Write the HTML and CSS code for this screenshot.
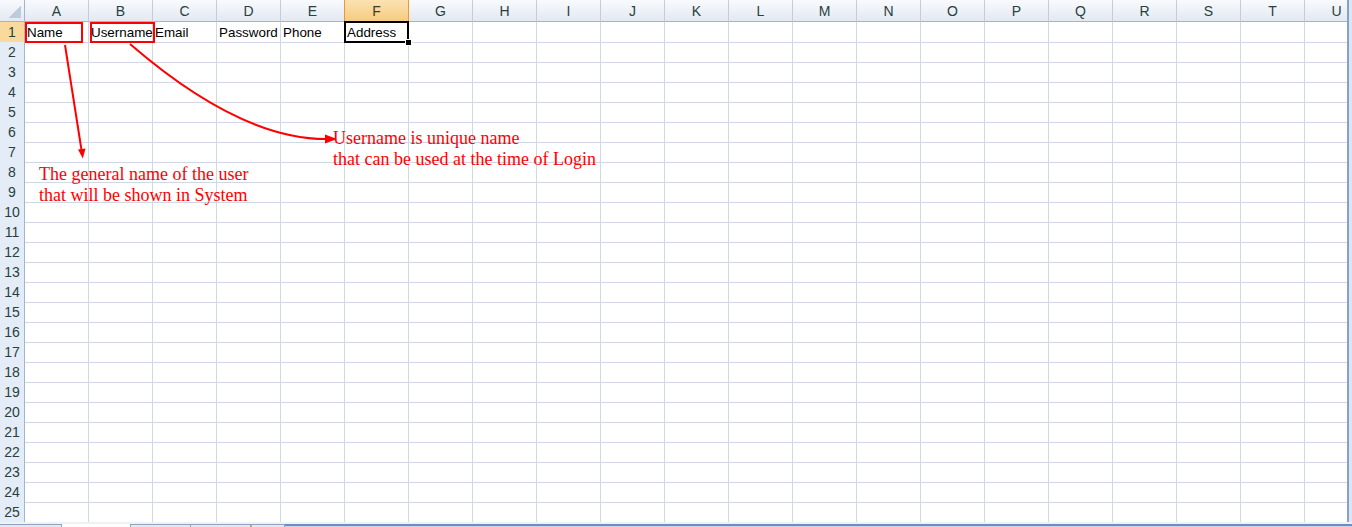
FILE: index.html
```html
<!DOCTYPE html>
<html lang="en">
<head>
<meta charset="utf-8">
<title>Users sheet</title>
<link rel="stylesheet" href="styles.css">
</head>
<body>
<div class="app">
  <div class="main">
    <div class="sheet">
      <div class="row hdr">
        <span class="corner"></span><span>A</span><span>B</span><span>C</span><span>D</span><span>E</span><span class="sel">F</span><span>G</span><span>H</span><span>I</span><span>J</span><span>K</span><span>L</span><span>M</span><span>N</span><span>O</span><span>P</span><span>Q</span><span>R</span><span>S</span><span>T</span><span>U</span>
      </div>
      <div class="row">
        <span class="rh cur">1</span><span class="box box-a">Name</span><span class="box box-b">Username</span><span>Email</span><span>Password</span><span>Phone</span><span class="active">Address</span><span></span><span></span><span></span><span></span><span></span><span></span><span></span><span></span><span></span><span></span><span></span><span></span><span></span><span></span><span></span>
      </div>
      <div class="row"><span class="rh">2</span><span></span><span></span><span></span><span></span><span></span><span></span><span></span><span></span><span></span><span></span><span></span><span></span><span></span><span></span><span></span><span></span><span></span><span></span><span></span><span></span><span></span></div>
      <div class="row"><span class="rh">3</span><span></span><span></span><span></span><span></span><span></span><span></span><span></span><span></span><span></span><span></span><span></span><span></span><span></span><span></span><span></span><span></span><span></span><span></span><span></span><span></span><span></span></div>
      <div class="row"><span class="rh">4</span><span></span><span></span><span></span><span></span><span></span><span></span><span></span><span></span><span></span><span></span><span></span><span></span><span></span><span></span><span></span><span></span><span></span><span></span><span></span><span></span><span></span></div>
      <div class="row"><span class="rh">5</span><span></span><span></span><span></span><span></span><span></span><span></span><span></span><span></span><span></span><span></span><span></span><span></span><span></span><span></span><span></span><span></span><span></span><span></span><span></span><span></span><span></span></div>
      <div class="row"><span class="rh">6</span><span></span><span></span><span></span><span></span><span></span><span></span><span></span><span></span><span></span><span></span><span></span><span></span><span></span><span></span><span></span><span></span><span></span><span></span><span></span><span></span><span></span></div>
      <div class="row"><span class="rh">7</span><span></span><span></span><span></span><span></span><span></span><span></span><span></span><span></span><span></span><span></span><span></span><span></span><span></span><span></span><span></span><span></span><span></span><span></span><span></span><span></span><span></span></div>
      <div class="row"><span class="rh">8</span><span></span><span></span><span></span><span></span><span></span><span></span><span></span><span></span><span></span><span></span><span></span><span></span><span></span><span></span><span></span><span></span><span></span><span></span><span></span><span></span><span></span></div>
      <div class="row"><span class="rh">9</span><span></span><span></span><span></span><span></span><span></span><span></span><span></span><span></span><span></span><span></span><span></span><span></span><span></span><span></span><span></span><span></span><span></span><span></span><span></span><span></span><span></span></div>
      <div class="row"><span class="rh">10</span><span></span><span></span><span></span><span></span><span></span><span></span><span></span><span></span><span></span><span></span><span></span><span></span><span></span><span></span><span></span><span></span><span></span><span></span><span></span><span></span><span></span></div>
      <div class="row"><span class="rh">11</span><span></span><span></span><span></span><span></span><span></span><span></span><span></span><span></span><span></span><span></span><span></span><span></span><span></span><span></span><span></span><span></span><span></span><span></span><span></span><span></span><span></span></div>
      <div class="row"><span class="rh">12</span><span></span><span></span><span></span><span></span><span></span><span></span><span></span><span></span><span></span><span></span><span></span><span></span><span></span><span></span><span></span><span></span><span></span><span></span><span></span><span></span><span></span></div>
      <div class="row"><span class="rh">13</span><span></span><span></span><span></span><span></span><span></span><span></span><span></span><span></span><span></span><span></span><span></span><span></span><span></span><span></span><span></span><span></span><span></span><span></span><span></span><span></span><span></span></div>
      <div class="row"><span class="rh">14</span><span></span><span></span><span></span><span></span><span></span><span></span><span></span><span></span><span></span><span></span><span></span><span></span><span></span><span></span><span></span><span></span><span></span><span></span><span></span><span></span><span></span></div>
      <div class="row"><span class="rh">15</span><span></span><span></span><span></span><span></span><span></span><span></span><span></span><span></span><span></span><span></span><span></span><span></span><span></span><span></span><span></span><span></span><span></span><span></span><span></span><span></span><span></span></div>
      <div class="row"><span class="rh">16</span><span></span><span></span><span></span><span></span><span></span><span></span><span></span><span></span><span></span><span></span><span></span><span></span><span></span><span></span><span></span><span></span><span></span><span></span><span></span><span></span><span></span></div>
      <div class="row"><span class="rh">17</span><span></span><span></span><span></span><span></span><span></span><span></span><span></span><span></span><span></span><span></span><span></span><span></span><span></span><span></span><span></span><span></span><span></span><span></span><span></span><span></span><span></span></div>
      <div class="row"><span class="rh">18</span><span></span><span></span><span></span><span></span><span></span><span></span><span></span><span></span><span></span><span></span><span></span><span></span><span></span><span></span><span></span><span></span><span></span><span></span><span></span><span></span><span></span></div>
      <div class="row"><span class="rh">19</span><span></span><span></span><span></span><span></span><span></span><span></span><span></span><span></span><span></span><span></span><span></span><span></span><span></span><span></span><span></span><span></span><span></span><span></span><span></span><span></span><span></span></div>
      <div class="row"><span class="rh">20</span><span></span><span></span><span></span><span></span><span></span><span></span><span></span><span></span><span></span><span></span><span></span><span></span><span></span><span></span><span></span><span></span><span></span><span></span><span></span><span></span><span></span></div>
      <div class="row"><span class="rh">21</span><span></span><span></span><span></span><span></span><span></span><span></span><span></span><span></span><span></span><span></span><span></span><span></span><span></span><span></span><span></span><span></span><span></span><span></span><span></span><span></span><span></span></div>
      <div class="row"><span class="rh">22</span><span></span><span></span><span></span><span></span><span></span><span></span><span></span><span></span><span></span><span></span><span></span><span></span><span></span><span></span><span></span><span></span><span></span><span></span><span></span><span></span><span></span></div>
      <div class="row"><span class="rh">23</span><span></span><span></span><span></span><span></span><span></span><span></span><span></span><span></span><span></span><span></span><span></span><span></span><span></span><span></span><span></span><span></span><span></span><span></span><span></span><span></span><span></span></div>
      <div class="row"><span class="rh">24</span><span></span><span></span><span></span><span></span><span></span><span></span><span></span><span></span><span></span><span></span><span></span><span></span><span></span><span></span><span></span><span></span><span></span><span></span><span></span><span></span><span></span></div>
      <div class="row"><span class="rh">25</span><span></span><span></span><span></span><span></span><span></span><span></span><span></span><span></span><span></span><span></span><span></span><span></span><span></span><span></span><span></span><span></span><span></span><span></span><span></span><span></span><span></span></div>

      <div class="drawing">
        <svg class="arrows" width="1347" height="522" viewBox="0 0 1347 522">
          <line x1="65" y1="45" x2="81.5" y2="150" stroke="#f00" stroke-width="2"/>
          <polygon points="82.8,158.5 78,149.5 85.5,148.5" fill="#f00"/>
          <path d="M130,44 Q240,139 326,139" fill="none" stroke="#f00" stroke-width="2"/>
          <polygon points="337,139 325,134.5 325,143.5" fill="#f00"/>
        </svg>
        <div class="note note-name">The general name of the user<br>that will be shown in System</div>
        <div class="note note-user">Username is unique name<br>that can be used at the time of Login</div>
      </div>
    </div>
    <div class="vscroll"></div>
  </div>
  <div class="tabs">
    <span class="tab first"></span><span class="tab active-tab"></span><span class="tab"></span><span class="tab"></span><span class="tab small"></span><span class="hscroll"></span>
  </div>
</div>
</body>
</html>
```

FILE: styles.css
```css
*, *::before, *::after { box-sizing: border-box; }
html, body { margin: 0; padding: 0; }
body {
  width: 1352px;
  height: 527px;
  overflow: hidden;
  background: #fff;
  font-family: "Liberation Sans", Arial, sans-serif;
  font-size: 13.4px;
  color: #000;
}
.app { display: flex; flex-direction: column; height: 527px; }
.main { display: flex; height: 522px; flex: none; }
.sheet { position: relative; width: 1347px; height: 522px; overflow: hidden; flex: none; }

.row {
  display: grid;
  grid-template-columns: 25px repeat(21, 64px);
  height: 20px;
}
.row > span {
  position: relative;
  border-right: 1px solid #d0d7e5;
  border-bottom: 1px solid #d0d7e5;
  padding-left: 2px;
  padding-top: 1px;
  line-height: 19px;
  white-space: nowrap;
  overflow: visible;
}

/* column headers */
.row.hdr { height: 22px; }
.row.hdr > span {
  background: linear-gradient(#f8fafd, #e3e9f2);
  border-right: 1px solid #bfcde0;
  border-bottom: 1px solid #9eb6ce;
  color: #27413e;
  font-size: 14px;
  text-align: center;
  padding: 1px 0 0;
  line-height: 20px;
}
.row.hdr > span.corner { border-right-color: #9eb6ce; }
.row.hdr > span.corner::after {
  content: "";
  position: absolute;
  right: 3px;
  bottom: 3px;
  width: 12px;
  height: 12px;
  background: linear-gradient(135deg, transparent 50%, #bccbde 50%);
}
.row.hdr > span.sel {
  background: linear-gradient(#fbe2b2, #f6cc80);
  border-right-color: #f29536;
  border-bottom-color: #f29536;
  box-shadow: -1px 0 0 #f29536;
  color: #3c3a2e;
}

/* row headers */
.row > span.rh {
  background: #e4ecf7;
  border-right: 1px solid #9eb6ce;
  border-bottom: 1px solid #b3c4da;
  color: #27413e;
  font-size: 14px;
  text-align: center;
  padding: 1px 0 0;
  line-height: 19px;
}
.row > span.rh.cur {
  background: #f9d99c;
  border-bottom-color: #b3c4da;
}

/* red markers drawn over cells */
.box { z-index: 1; }
.box::after {
  content: "";
  position: absolute;
  top: 0;
  height: 21px;
  border: 2px solid #f00;
}
.box-a::after { left: 0; width: 58px; }
.box-b::after { left: 1px; width: 65px; }

/* active cell */
.active { z-index: 2; }
.active::before {
  content: "";
  position: absolute;
  left: -1px;
  top: -1px;
  width: 65px;
  height: 22px;
  border: 2px solid #000;
}
.active::after {
  content: "";
  position: absolute;
  right: -4px;
  bottom: -4px;
  width: 7px;
  height: 7px;
  background: #000;
  border: 1px solid #fff;
}

/* drawing layer (arrows and text boxes) */
.drawing { position: absolute; inset: 0; pointer-events: none; z-index: 3; }
.arrows { position: absolute; left: 0; top: 0; }
.note {
  position: absolute;
  font-family: "Liberation Serif", "Times New Roman", serif;
  font-size: 18px;
  line-height: 21px;
  color: #f00;
  white-space: nowrap;
}
.note-name { left: 39px; top: 164px; }
.note-user { left: 333px; top: 128px; }

/* scrollbars / tabs */
.vscroll {
  width: 5px;
  flex: none;
  border-left: 2px solid #86a2cc;
  background: #dbe5f3;
}
.tabs {
  display: flex;
  height: 5px;
  flex: none;
  background: #eef2f7;
}
.tab {
  width: 60px;
  margin-top: 2px;
  border-top: 1px solid #8fa3c0;
  border-right: 1px solid #8fa3c0;
  background: #e4e9f1;
}
.tab.first { width: 62px; }
.tab.active-tab { width: 69px; background: #fff; border-top: 0; border-right: 1px solid #8fa3c0; }
.tab.small { width: 34px; box-shadow: inset 5px 0 0 -4px #f0a030; }
.hscroll {
  flex: 1;
  margin-top: 2px;
  border-top: 2px solid #6d8dc0;
  background: #c7d6eb;
}
```
